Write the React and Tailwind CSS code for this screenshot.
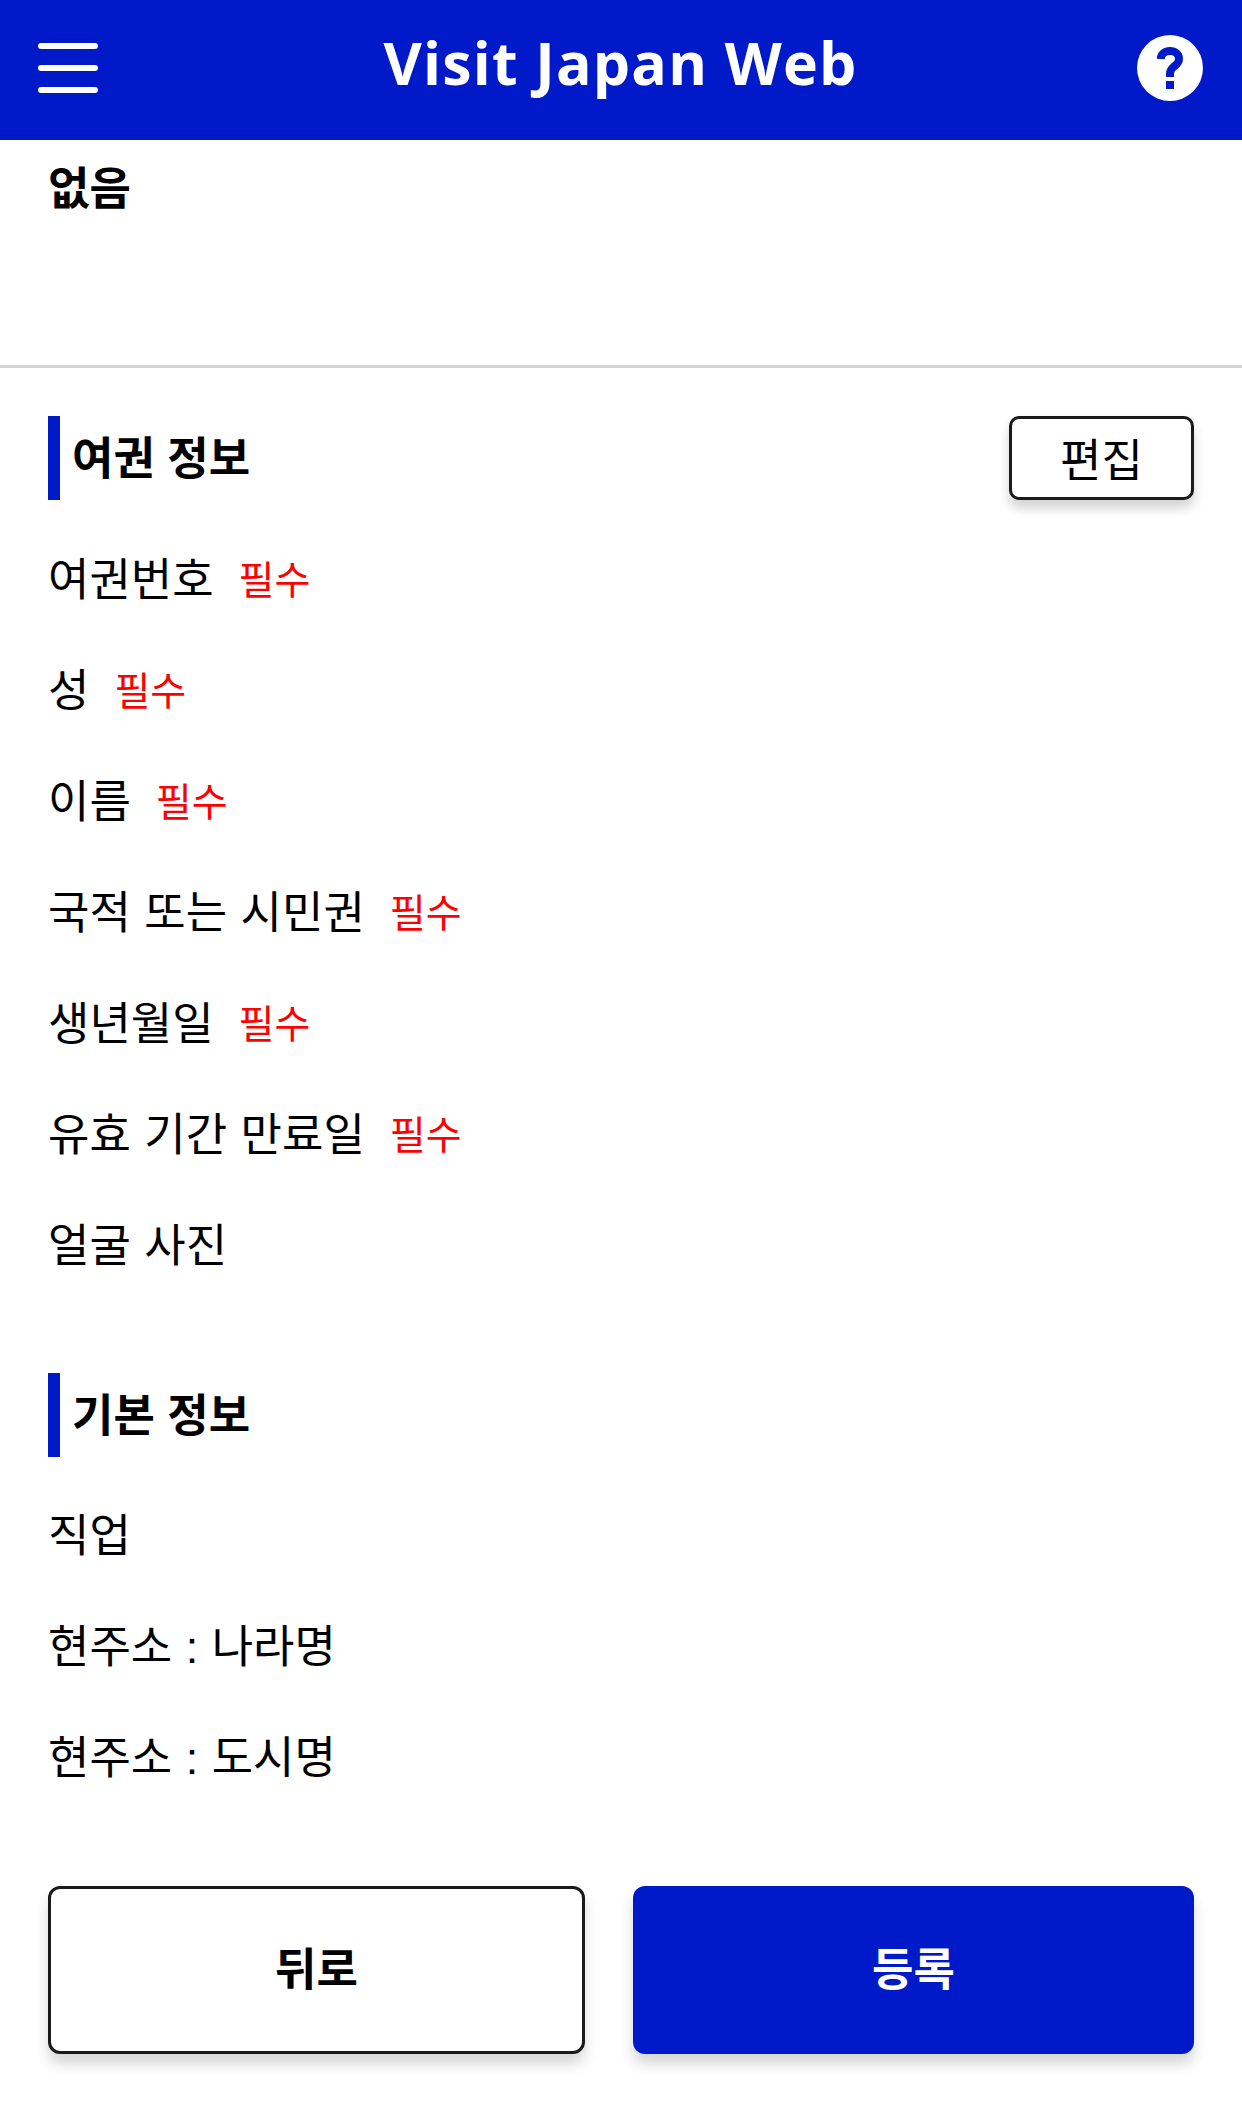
const passportFields = [
  { label: '여권번호', required: true },
  { label: '성', required: true },
  { label: '이름', required: true },
  { label: '국적 또는 시민권', required: true },
  { label: '생년월일', required: true },
  { label: '유효 기간 만료일', required: true },
  { label: '얼굴 사진' },
]

const basicFields = [{ label: '직업' }, { label: '현주소 : 나라명' }, { label: '현주소 : 도시명' }]

function Field({ label, required }) {
  return (
    <div className="flex h-[111px] items-center pt-[7px]">
      <span className="text-[45px] leading-none text-black [word-spacing:1px]">{label}</span>
      {required && <span className="ml-[25px] text-[39px] leading-none text-[#ff0000]">필수</span>}
    </div>
  )
}

function SectionTitle({ children }) {
  return (
    <h2 className="flex h-[84px] items-center border-l-[12px] border-[#0019c9] pl-3 pt-[3px] text-[45px] font-bold leading-none text-black">
      {children}
    </h2>
  )
}

export default function App() {
  return (
    <div className="min-h-[2108px] w-[1242px] overflow-hidden bg-white font-['Liberation_Sans','Noto_Sans_CJK_KR',sans-serif]">
      <header className="flex h-[140px] items-center justify-between bg-[#0019c9] pb-[5px] pl-[38px] pr-[39px] text-white">
        <div className="mr-[6px] flex w-[60px] flex-col gap-[16px]">
          <span className="h-[6px] rounded-full bg-white" />
          <span className="h-[6px] rounded-full bg-white" />
          <span className="h-[6px] rounded-full bg-white" />
        </div>
        <h1 className="-translate-y-[5px] font-['Open_Sans',sans-serif] text-[59px] font-bold leading-none tracking-[1.2px]">
          Visit Japan Web
        </h1>
        <svg width="66" height="66" viewBox="0 0 66 66">
          <circle cx="33" cy="33" r="33" fill="#fff" />
          <path
            d="M23.7 24C24 19 28 16 33 16C38 16 42 19 42 24C42 28 39 30 36.5 32C34 34 33 36 33 39V42"
            fill="none"
            stroke="#0019c9"
            strokeWidth="8"
          />
          <rect x="29" y="46" width="8" height="8" fill="#0019c9" />
        </svg>
      </header>

      <div className="h-[228px] border-b-[3px] border-[#d4d4d4] px-12 pt-[27px]">
        <p className="text-[45px] font-bold leading-none text-black">없음</p>
      </div>

      <main className="px-12 pt-[48px]">
        <div className="flex items-center justify-between">
          <SectionTitle>여권 정보</SectionTitle>
          <button className="h-[84px] w-[185px] rounded-[10px] border-[3px] border-[#1a1a1a] bg-white pt-[6px] text-[45px] leading-none text-black shadow-[0_8px_12px_rgba(0,0,0,0.18)]">
            편집
          </button>
        </div>
        <div className="mt-[21px]">
          {passportFields.map((f) => (
            <Field key={f.label} {...f} />
          ))}
        </div>

        <div className="mt-[75px]">
          <SectionTitle>기본 정보</SectionTitle>
        </div>
        <div className="mt-[20px]">
          {basicFields.map((f) => (
            <Field key={f.label} {...f} />
          ))}
        </div>

        <div className="mt-[76px] flex gap-12">
          <button className="h-[168px] w-[537px] rounded-[12px] border-[3px] border-[#1a1a1a] bg-white text-[45px] font-bold leading-none text-black shadow-[0_10px_14px_rgba(0,0,0,0.16)]">
            뒤로
          </button>
          <button className="h-[168px] w-[561px] rounded-[12px] bg-[#0019c9] text-[45px] font-bold leading-none text-white shadow-[0_10px_14px_rgba(0,0,0,0.16)]">
            등록
          </button>
        </div>
      </main>
    </div>
  )
}
